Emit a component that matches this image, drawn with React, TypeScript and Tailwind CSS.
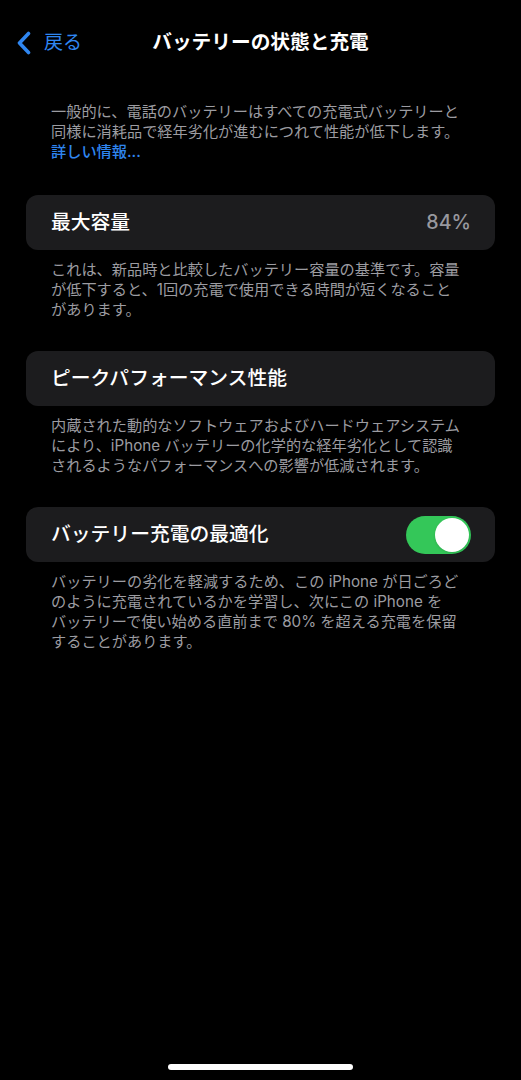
import React from 'react';

const font = { fontFamily: 'Inter, "Noto Sans CJK JP", sans-serif' };

const ChevronLeft = () => (
  <svg width="16" height="24" viewBox="0 0 16 24" fill="none">
    <path
      d="M12.5 2.5 L3.5 12 L12.5 21.5"
      stroke="#2f86f0"
      strokeWidth="3.6"
      strokeLinecap="round"
      strokeLinejoin="round"
    />
  </svg>
);

const Toggle = ({ on }: { on: boolean }) => (
  <div
    className={`flex h-[38px] w-[65px] items-center rounded-full p-[2px] ${
      on ? 'justify-end bg-[#34c759]' : 'justify-start bg-[#39393d]'
    }`}
  >
    <div className="h-[34px] w-[34px] rounded-full bg-white shadow" />
  </div>
);

interface SectionProps {
  title: string;
  right?: React.ReactNode;
  lines: string[];
  className?: string;
}

const Section = ({ title, right, lines, className = '' }: SectionProps) => (
  <div className={className}>
    <div className="flex h-[55px] items-center justify-between rounded-[12px] bg-[#1c1c1e] pl-[25px] pr-[24px]">
      <span className="text-[19.8px] font-medium text-white">{title}</span>
      {right}
    </div>
    <p className="whitespace-nowrap px-[25px] pt-[10px] text-[15.2px] leading-[20px] text-[#9c9ca1]">
      {lines.map((line, i) => (
        <span key={i} className="block">
          {line}
        </span>
      ))}
    </p>
  </div>
);

export default function App() {
  return (
    <div className="flex h-[1080px] w-full flex-col bg-black" style={font}>
      {/* nav bar */}
      <div className="mt-[21px] grid h-[44px] grid-cols-[1fr_auto_1fr] items-center">
        <button className="flex items-center gap-[12px] pl-[16px] text-[19px] text-[#2f86f0]">
          <ChevronLeft />
          <span>戻る</span>
        </button>
        <h1 className="text-[19.7px] font-bold text-white">バッテリーの状態と充電</h1>
        <div />
      </div>

      <div className="px-[26px]">
        <p className="mt-[37px] whitespace-nowrap px-[25px] text-[15.2px] leading-[20px] text-[#9c9ca1]">
          <span className="block">一般的に、電話のバッテリーはすべての充電式バッテリーと</span>
          <span className="block">同様に消耗品で経年劣化が進むにつれて性能が低下します。</span>
          <span className="block font-medium text-[#2f86f0]">詳しい情報...</span>
        </p>

        <Section
          className="mt-[33px]"
          title="最大容量"
          right={<span className="text-[19.6px] font-medium text-[#98989e]">84%</span>}
          lines={[
            'これは、新品時と比較したバッテリー容量の基準です。容量',
            'が低下すると、1回の充電で使用できる時間が短くなること',
            'があります。',
          ]}
        />

        <Section
          className="mt-[31px]"
          title="ピークパフォーマンス性能"
          lines={[
            '内蔵された動的なソフトウェアおよびハードウェアシステム',
            'により、iPhone バッテリーの化学的な経年劣化として認識',
            'されるようなパフォーマンスへの影響が低減されます。',
          ]}
        />

        <Section
          className="mt-[31px]"
          title="バッテリー充電の最適化"
          right={<Toggle on />}
          lines={[
            'バッテリーの劣化を軽減するため、この iPhone が日ごろど',
            'のように充電されているかを学習し、次にこの iPhone を',
            'バッテリーで使い始める直前まで 80% を超える充電を保留',
            'することがあります。',
          ]}
        />
      </div>

      <div className="flex-1" />
      <div className="flex justify-center pb-[10px]">
        <div className="h-[6px] w-[185px] rounded-full bg-white" />
      </div>
    </div>
  );
}
